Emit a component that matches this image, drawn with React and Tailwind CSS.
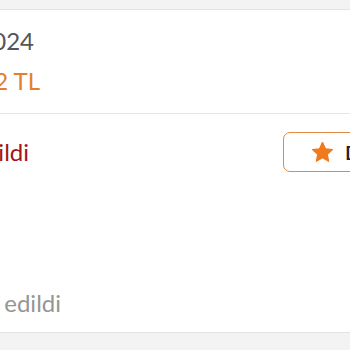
import React from "react";

function Star() {
  const R = 10.5;
  const r = 5;
  const cx = 10.5;
  const cy = 10.8;
  const pts = [];
  for (let i = 0; i < 10; i++) {
    const rad = i % 2 === 0 ? R : r;
    const a = (Math.PI / 5) * i - Math.PI / 2;
    pts.push(`${(cx + rad * Math.cos(a)).toFixed(2)},${(cy + rad * Math.sin(a)).toFixed(2)}`);
  }
  return (
    <svg width="21" height="20" viewBox="0 0 21 20" className="shrink-0">
      <polygon points={pts.join(" ")} fill="#f07a1c" stroke="#f07a1c" strokeWidth="1.2" strokeLinejoin="round" />
    </svg>
  );
}

export default function App() {
  return (
    <div className="w-[350px] h-[350px] overflow-hidden bg-[#f3f3f3] pt-[9px]" style={{ fontFamily: "Lato, 'Noto Sans', sans-serif" }}>
      <div className="bg-white border-y border-[#e3e3e3] h-[324px] flex flex-col">
        <div className="pt-[17px] pb-[18px] border-b-[1.5px] border-[#e6e6e6] flex flex-col gap-[12px]">
          <div className="ml-[-266px] w-[300px] text-right text-[24px] leading-[28px] text-[#555555]">12.01.2024</div>
          <div className="ml-[-260px] w-[300px] text-right text-[24px] leading-[28px] text-[#e2802f]">1.250,42 TL</div>
        </div>
        <div className="pt-[18px] flex flex-col">
          <div className="flex items-center justify-between">
            <div className="ml-[-271px] w-[300px] text-right text-[24px] leading-[28px] text-[#a3141a]">İptal edildi</div>
            <div className="mr-[-140px] w-[207px] h-[40px] border-[1.5px] border-[#e38a44] rounded-[7px] flex items-center pl-[28px] gap-[12px]">
              <Star />
              <span className="text-[20px] font-semibold text-[#222222] whitespace-nowrap">Değerlendir</span>
            </div>
          </div>
          <div className="mt-[117px] ml-[-239px] w-[300px] text-right text-[24px] leading-[28px] text-[#959595] whitespace-nowrap">Teslim edildi</div>
        </div>
      </div>
    </div>
  );
}
